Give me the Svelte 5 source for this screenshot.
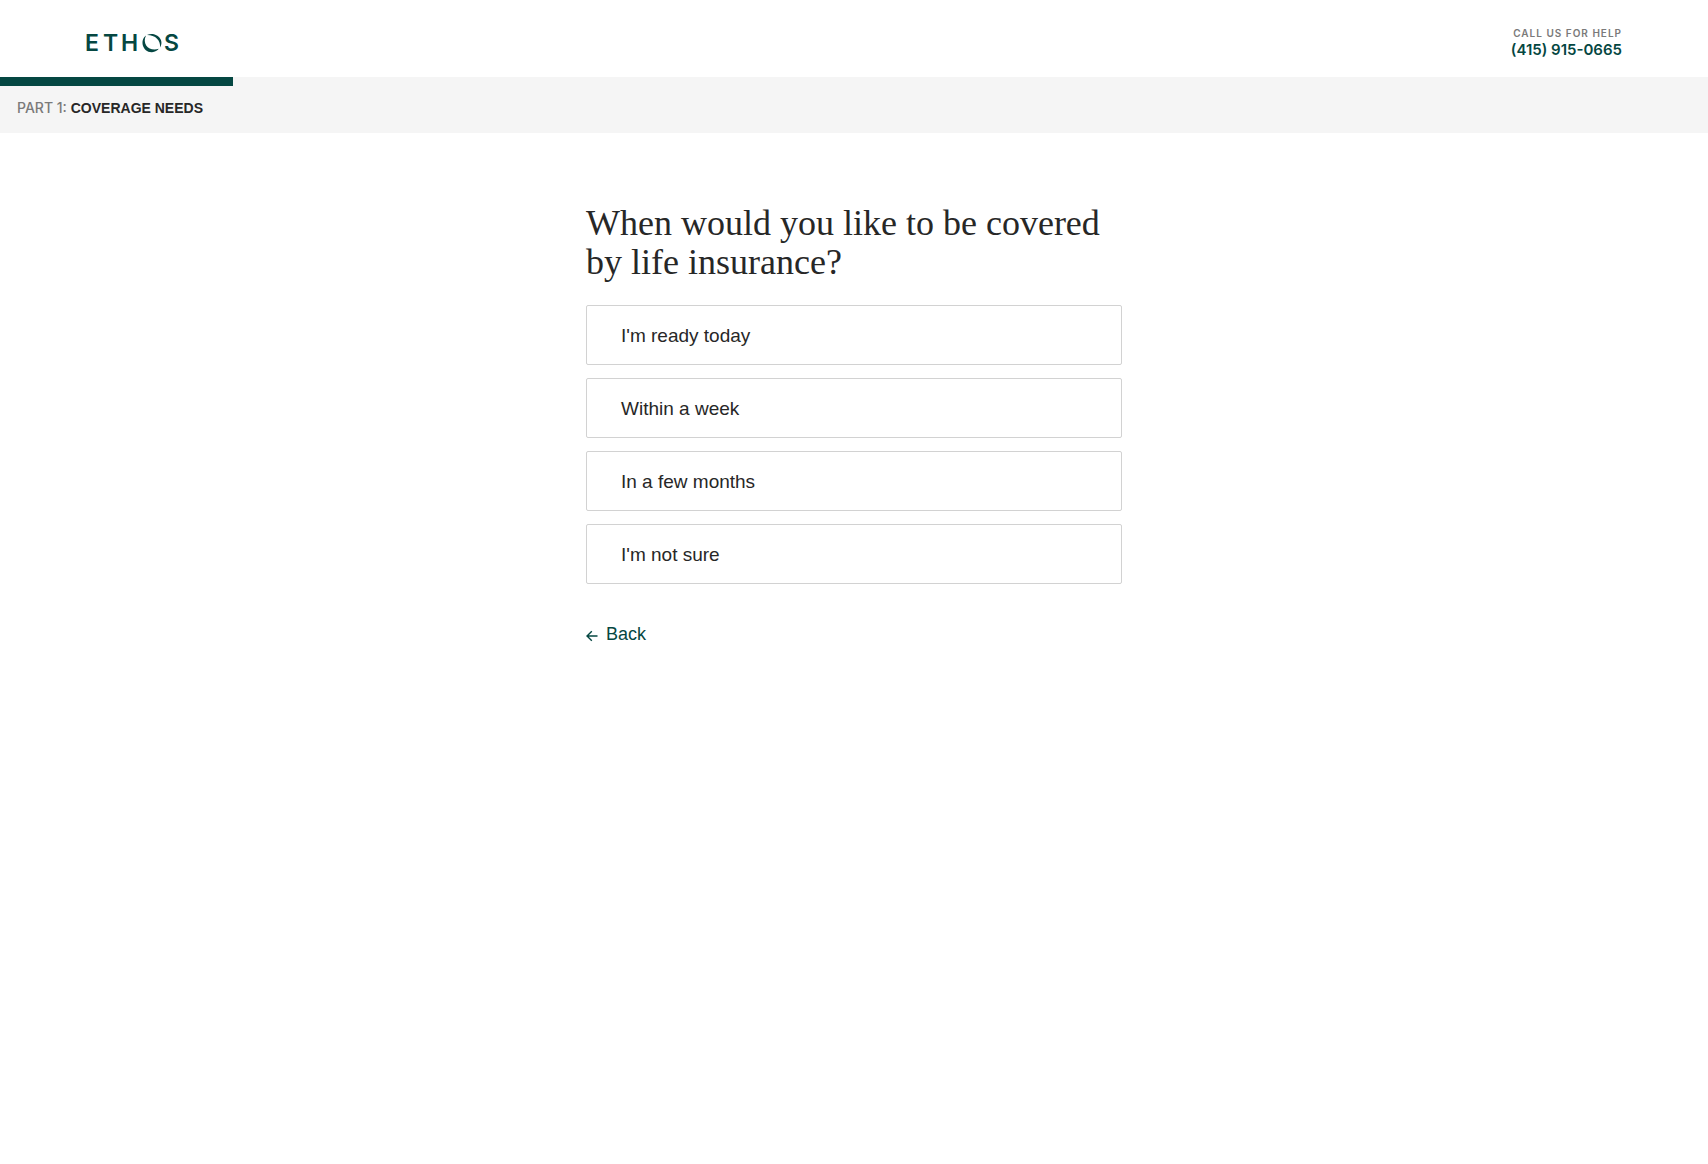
<script>
  const options = ["I'm ready today", 'Within a week', 'In a few months', "I'm not sure"];
  let selected = $state(null);
</script>

<header class="topbar">
  <a class="logo" href="/" aria-label="Ethos">
    <svg width="104" height="32" viewBox="0 0 104 32">
      <g class="letters">
        <text x="4" y="25">E</text>
        <text x="22" y="25">T</text>
        <text x="40" y="25">H</text>
        <text x="83" y="25">S</text>
      </g>
      <path class="ring" d="M66 9 C74 5 84.5 13 79 21.6 C80 14.5 74.5 9 66 9Z" />
      <path class="ring" d="M65 9.5 C58.5 14 61.5 26.5 71 26.2 C74 26 76.5 24.5 77.8 22.8 C69 26.2 60.5 18.5 65 9.5Z" />
    </svg>
  </a>
  <div class="help">
    <span class="help-label">CALL US FOR HELP</span>
    <a class="phone" href="tel:+14159150665">(415) 915-0665</a>
  </div>
</header>

<section class="progress" aria-label="Progress">
  <div class="track"><div class="fill"></div></div>
  <p class="step"><span>PART 1:</span> <strong>COVERAGE NEEDS</strong></p>
</section>

<main>
  <h1>When would you like to be covered by life insurance?</h1>
  <div class="options">
    {#each options as option}
      <button class="option" aria-pressed={selected === option} onclick={() => (selected = option)}>{option}</button>
    {/each}
  </div>
  <button class="back">
    <svg width="12" height="16" viewBox="0 0 12 16" aria-hidden="true">
      <path d="M11.5 10H1M5.8 5.2L1 10l4.8 4.8" />
    </svg>
    Back
  </button>
</main>

<style>
  :global(body) {
    margin: 0;
    background: #fff;
    color: #272727;
    font-family: 'Liberation Sans', sans-serif;
  }
  .topbar {
    display: flex;
    justify-content: space-between;
    align-items: center;
    box-sizing: border-box;
    height: 77px;
    padding: 7px 86px 0 81px;
  }
  .logo,
  .logo svg {
    display: block;
  }
  .letters {
    fill: #054742;
    font: 600 23px Inter, sans-serif;
  }
  .ring {
    fill: #054742;
  }
  .help {
    display: flex;
    flex-direction: column;
    align-items: flex-end;
    font-family: Inter, sans-serif;
  }
  .help-label {
    color: #7a7a7a;
    font-size: 10px;
    font-weight: 600;
    line-height: 16px;
    letter-spacing: 1px;
  }
  .phone {
    color: #054742;
    font-size: 15px;
    font-weight: 600;
    line-height: 18px;
    text-decoration: none;
  }
  .progress {
    background: #f5f5f5;
  }
  .fill {
    width: 233px;
    height: 9px;
    background: #054742;
  }
  .step {
    margin: 0;
    padding: 12px 17px 15px;
    color: #7a7a7a;
    font-size: 14px;
    line-height: 20px;
  }
  .step span {
    font-family: Inter, sans-serif;
    font-weight: 500;
  }
  .step strong {
    color: #272727;
    font-weight: 700;
  }
  main {
    max-width: 536px;
    margin: 0 auto;
    padding: 71px 16px;
  }
  h1 {
    margin: 0 0 23px;
    font-family: 'Liberation Serif', serif;
    font-size: 36px;
    font-weight: 400;
    line-height: 39px;
  }
  .options {
    display: grid;
    gap: 13px;
  }
  .option {
    height: 60px;
    padding: 1px 34px 0;
    border: 1px solid #d2d2d2;
    border-radius: 2px;
    background: #fff;
    color: #272727;
    font: 400 19px/24px 'Liberation Sans', sans-serif;
    text-align: left;
    cursor: pointer;
  }
  .back {
    display: flex;
    align-items: center;
    gap: 8px;
    margin-top: 38px;
    padding: 0;
    border: 0;
    background: none;
    color: #054742;
    font: 400 18px/24px 'Liberation Sans', sans-serif;
    cursor: pointer;
  }
  .back path {
    fill: none;
    stroke: #054742;
    stroke-width: 1.4;
  }
</style>
